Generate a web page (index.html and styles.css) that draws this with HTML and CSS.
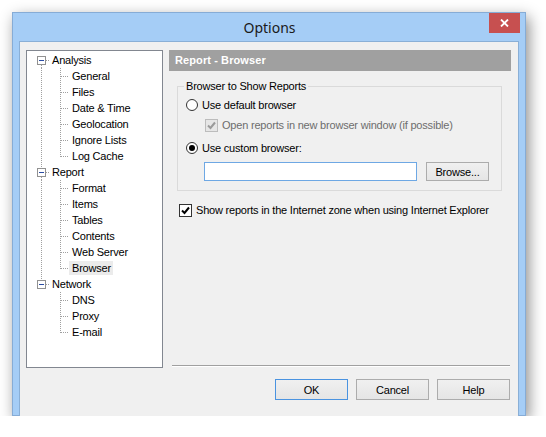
FILE: index.html
```html
<!DOCTYPE html>
<html>
<head>
<meta charset="utf-8">
<link rel="stylesheet" href="styles.css">
</head>
<body>
<div class="window">
  <div class="titlebar">
    <span></span>
    <span class="title">Options</span>
    <span class="close"><svg width="9" height="8" viewBox="0 0 9 8"><path d="M1 0.5 L8 7.5 M8 0.5 L1 7.5" stroke="#fff" stroke-width="1.8" fill="none"/></svg></span>
  </div>
  <div class="client">
    <div class="main">
      <div class="tree">
        <div class="row root first"><span class="exp"></span><span class="lbl">Analysis</span></div>
        <div class="row child cont"><span class="lbl">General</span></div>
        <div class="row child cont"><span class="lbl">Files</span></div>
        <div class="row child cont"><span class="lbl">Date &amp; Time</span></div>
        <div class="row child cont"><span class="lbl">Geolocation</span></div>
        <div class="row child cont"><span class="lbl">Ignore Lists</span></div>
        <div class="row child cont lastc"><span class="lbl">Log Cache</span></div>
        <div class="row root mid"><span class="exp"></span><span class="lbl">Report</span></div>
        <div class="row child cont"><span class="lbl">Format</span></div>
        <div class="row child cont"><span class="lbl">Items</span></div>
        <div class="row child cont"><span class="lbl">Tables</span></div>
        <div class="row child cont"><span class="lbl">Contents</span></div>
        <div class="row child cont"><span class="lbl">Web Server</span></div>
        <div class="row child cont lastc"><span class="lbl sel">Browser</span></div>
        <div class="row root last"><span class="exp"></span><span class="lbl">Network</span></div>
        <div class="row child"><span class="lbl">DNS</span></div>
        <div class="row child"><span class="lbl">Proxy</span></div>
        <div class="row child lastc"><span class="lbl">E-mail</span></div>
      </div>
      <div class="panel">
        <div class="header">Report - Browser</div>
        <div class="group">
          <div class="legend">Browser to Show Reports</div>
          <div class="opt r1"><span class="radio"></span><span>Use default browser</span></div>
          <div class="opt c1 disabled"><span class="check dis"><svg width="11" height="11" viewBox="0 0 11 11"><path d="M2 5.5 L4.5 8 L9 2.5" stroke="#9a9a9a" stroke-width="2" fill="none"/></svg></span><span>Open reports in new browser window (if possible)</span></div>
          <div class="opt r2"><span class="radio on"></span><span>Use custom browser:</span></div>
          <div class="pathrow"><div class="input"></div><div class="btn browse">Browse...</div></div>
        </div>
        <div class="opt c2"><span class="check"><svg width="11" height="11" viewBox="0 0 11 11"><path d="M2 5.5 L4.5 8 L9 2.5" stroke="#000" stroke-width="2" fill="none"/></svg></span><span>Show reports in the Internet zone when using Internet Explorer</span></div>
        <div class="sep"></div>
      </div>
    </div>
    <div class="buttons">
      <div class="btn def">OK</div>
      <div class="btn">Cancel</div>
      <div class="btn">Help</div>
    </div>
  </div>
</div>
</body>
</html>
```

FILE: styles.css
```css
html, body {
  margin: 0;
  padding: 0;
  background: #ffffff;
}
body {
  font-family: "Liberation Sans", Arial, sans-serif;
  font-size: 11px;
  letter-spacing: -0.2px;
  color: #000;
}
.window {
  margin: 12px 0 0 12px;
  width: 514px;
  height: 404px;
  box-sizing: border-box;
  border: 1px solid #86acd6;
  background: #a5cdf6;
  padding-bottom: 5px;
  box-shadow: 3px 5px 14px rgba(0, 0, 0, 0.45);
}
.titlebar {
  height: 28px;
  padding: 0 5px 0 6px;
  display: grid;
  grid-template-columns: 1fr auto 1fr;
}
.title {
  font-family: "Noto Sans", "Open Sans", sans-serif;
  font-size: 14px;
  letter-spacing: 0;
  line-height: 28px;
  color: #1a1a1a;
  padding-top: 1px;
}
.close {
  justify-self: end;
  width: 31px;
  height: 20px;
  background: #c75050;
  display: flex;
  align-items: center;
  justify-content: center;
}
.client {
  margin: 0 6px;
  border: 1px solid #8aafd6;
  background: #f0f0f0;
  height: 367px;
  padding: 8px 7px 0 6px;
  display: flex;
  flex-direction: column;
}
.main {
  display: flex;
  gap: 6px;
  height: 318px;
}
.tree {
  width: 137px;
  box-sizing: border-box;
  border: 1px solid #828790;
  background: #fff;
  padding-top: 1px;
  --vd: repeating-linear-gradient(to bottom, #a0a0a0 0 1px, transparent 1px 2px);
  --hd: repeating-linear-gradient(to right, #a0a0a0 0 1px, transparent 1px 2px);
}
.row {
  height: 16px;
  display: flex;
  align-items: center;
  background-repeat: no-repeat;
}
.root {
  padding-left: 10px;
}
.root.first {
  background-image: var(--hd), var(--vd);
  background-position: 19px 8px, 14px 13px;
  background-size: 4px 1px, 1px 3px;
}
.root.mid {
  background-image: var(--hd), var(--vd), var(--vd);
  background-position: 19px 8px, 14px 0, 14px 13px;
  background-size: 4px 1px, 1px 4px, 1px 3px;
}
.root.last {
  background-image: var(--hd), var(--vd);
  background-position: 19px 8px, 14px 0;
  background-size: 4px 1px, 1px 4px;
}
.exp {
  width: 9px;
  height: 9px;
  box-sizing: border-box;
  border: 1px solid #919191;
  background: #fff;
  display: flex;
  align-items: center;
  justify-content: center;
  margin-right: 3px;
}
.exp::after {
  content: "";
  width: 5px;
  height: 1px;
  background: #2b4ca3;
}
.lbl {
  height: 14px;
  line-height: 14px;
  padding: 0 2px 0 3px;
  white-space: nowrap;
}
.lbl.sel {
  background: #ebebeb;
}
.child {
  padding-left: 42px;
  background-image: var(--hd), var(--vd);
  background-position: 34px 8px, 33px 0;
  background-size: 7px 1px, 1px 16px;
}
.child.lastc {
  background-size: 7px 1px, 1px 9px;
}
.child.cont {
  background-image: var(--hd), var(--vd), var(--vd);
  background-position: 34px 8px, 33px 0, 14px 0;
  background-size: 7px 1px, 1px 16px, 1px 16px;
}
.child.cont.lastc {
  background-size: 7px 1px, 1px 9px, 1px 16px;
}
.panel {
  flex: 1;
  display: flex;
  flex-direction: column;
}
.header {
  height: 21px;
  line-height: 21px;
  background: #a0a0a0;
  color: #fff;
  font-weight: bold;
  font-size: 11px;
  letter-spacing: 0.1px;
  padding-left: 6px;
}
.group {
  margin: 15px 9px 0 8px;
  border: 1px solid #dadada;
  height: 105px;
  box-sizing: border-box;
  display: flex;
  flex-direction: column;
}
.legend {
  align-self: flex-start;
  margin: -7px 0 0 6px;
  padding: 0 2px;
  background: #f0f0f0;
  height: 13px;
  line-height: 13px;
}
.opt {
  height: 16px;
  display: flex;
  align-items: center;
  white-space: nowrap;
}
.r1 {
  margin-top: 4px;
  padding-left: 8px;
}
.c1 {
  margin-top: 4px;
  padding-left: 27px;
}
.r2 {
  margin-top: 7px;
  padding-left: 8px;
}
.radio {
  width: 12px;
  height: 12px;
  box-sizing: border-box;
  border: 1px solid #333;
  border-radius: 50%;
  background: #fff;
  margin-right: 4px;
  display: flex;
  align-items: center;
  justify-content: center;
}
.radio.on::after {
  content: "";
  width: 6px;
  height: 6px;
  border-radius: 50%;
  background: #000;
}
.check {
  width: 13px;
  height: 13px;
  box-sizing: border-box;
  border: 1px solid #333;
  background: #fff;
  margin-right: 4px;
  display: flex;
  align-items: center;
  justify-content: center;
}
.check.dis {
  border-color: #bcbcbc;
  background: #e6e6e6;
}
.disabled {
  color: #6d6d6d;
}
.pathrow {
  display: flex;
  align-items: flex-start;
  margin-top: 6px;
  padding-left: 26px;
  gap: 9px;
}
.input {
  width: 213px;
  height: 19px;
  box-sizing: border-box;
  border: 1px solid #6ea8e4;
  background: #fff;
}
.btn {
  height: 21px;
  width: 73px;
  box-sizing: border-box;
  border: 1px solid #acacac;
  background: linear-gradient(#f0f0f0, #e5e5e5);
  display: flex;
  align-items: center;
  justify-content: center;
}
.btn.browse {
  width: 63px;
  height: 19px;
}
.btn.def {
  border-color: #4a93e0;
}
.c2 {
  margin-top: 11px;
  padding-left: 10px;
}
.sep {
  margin: auto 1px 1px 3px;
  border-top: 1px solid #a0a0a0;
  border-bottom: 1px solid #fff;
}
.buttons {
  display: flex;
  justify-content: flex-end;
  gap: 8px;
  margin-top: 11px;
  padding-right: 1px;
}
```
